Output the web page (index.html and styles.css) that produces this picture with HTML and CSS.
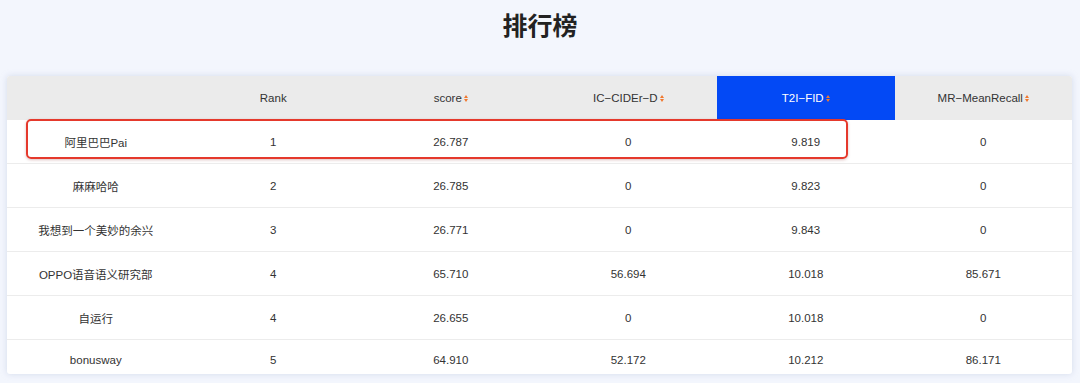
FILE: index.html
```html
<!DOCTYPE html>
<html lang="zh">
<head>
<meta charset="utf-8">
<link rel="stylesheet" href="styles.css">
</head>
<body>
<h1 class="title">排行榜</h1>
<div class="card">
  <div class="row head">
    <div class="cell"></div>
    <div class="cell">Rank</div>
    <div class="cell">score<span class="sort"></span></div>
    <div class="cell">IC−CIDEr−D<span class="sort"></span></div>
    <div class="cell active">T2I−FID<span class="sort"></span></div>
    <div class="cell">MR−MeanRecall<span class="sort"></span></div>
  </div>
  <div class="row">
    <div class="cell">阿里巴巴Pai</div><div class="cell">1</div><div class="cell">26.787</div><div class="cell">0</div><div class="cell">9.819</div><div class="cell">0</div>
  </div>
  <div class="row">
    <div class="cell">麻麻哈哈</div><div class="cell">2</div><div class="cell">26.785</div><div class="cell">0</div><div class="cell">9.823</div><div class="cell">0</div>
  </div>
  <div class="row">
    <div class="cell">我想到一个美妙的余兴</div><div class="cell">3</div><div class="cell">26.771</div><div class="cell">0</div><div class="cell">9.843</div><div class="cell">0</div>
  </div>
  <div class="row">
    <div class="cell">OPPO语音语义研究部</div><div class="cell">4</div><div class="cell">65.710</div><div class="cell">56.694</div><div class="cell">10.018</div><div class="cell">85.671</div>
  </div>
  <div class="row">
    <div class="cell">自运行</div><div class="cell">4</div><div class="cell">26.655</div><div class="cell">0</div><div class="cell">10.018</div><div class="cell">0</div>
  </div>
  <div class="row last">
    <div class="cell">bonusway</div><div class="cell">5</div><div class="cell">64.910</div><div class="cell">52.172</div><div class="cell">10.212</div><div class="cell">86.171</div>
  </div>
  <div class="highlight"></div>
</div>
</body>
</html>
```
FILE: styles.css
```css
* { box-sizing: border-box; }
html, body { margin: 0; padding: 0; }
body {
  background: #f3f6fd;
  font-family: "Liberation Sans", Arial, "Noto Sans CJK SC", sans-serif;
  color: #333;
  width: 1080px;
  height: 383px;
  overflow: hidden;
}
.title {
  margin: 0;
  height: 76px;
  padding-top: 6px;
  text-align: center;
  font-family: "Noto Sans CJK SC", sans-serif;
  font-size: 25px;
  font-weight: 700;
  color: #222;
  line-height: 36px;
}
.card {
  position: relative;
  margin: 0 8px 0 7px;
  width: 1065px;
  height: 298px;
  overflow: hidden;
  background: #fff;
  border-radius: 3px;
  box-shadow: 0 0 6px rgba(200, 208, 230, 0.7);
}
.row {
  display: grid;
  grid-template-columns: repeat(6, 1fr);
  height: 44px;
  border-bottom: 1px solid #ececec;
}
.row.last {
  border-bottom: none;
  padding-bottom: 4px;
}
.row.head {
  background: #ebebeb;
  border-bottom: none;
}
.cell {
  display: flex;
  align-items: center;
  justify-content: center;
  font-size: 11.5px;
  color: #333;
}
.row.head .cell.active {
  background: #0349f5;
  color: #fff;
}
.sort {
  display: inline-flex;
  flex-direction: column;
  gap: 1px;
  margin-left: 2px;
}
.sort::before, .sort::after {
  content: "";
  display: block;
  width: 0;
  height: 0;
  border-left: 2.5px solid transparent;
  border-right: 2.5px solid transparent;
}
.sort::before { border-bottom: 3px solid #f0782f; }
.sort::after { border-top: 3px solid #f0782f; }
.highlight {
  position: absolute;
  left: 19px;
  top: 43px;
  width: 822px;
  height: 40px;
  border: 2px solid #e5392c;
  border-radius: 5px;
  box-shadow: 0 1px 3px rgba(120, 0, 0, 0.25);
  pointer-events: none;
}
```
